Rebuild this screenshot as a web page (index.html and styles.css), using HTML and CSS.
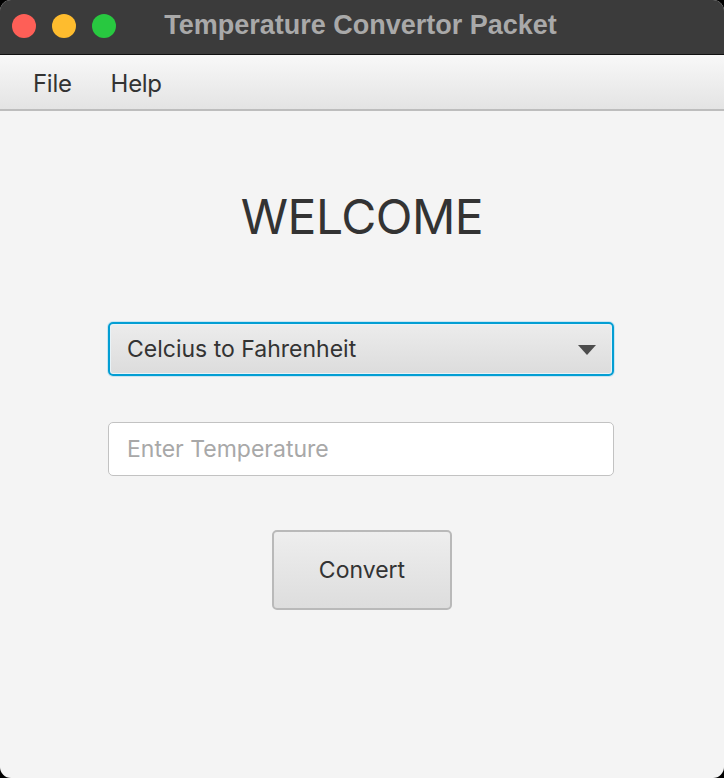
FILE: index.html
```html
<!DOCTYPE html>
<html>
<head>
<meta charset="utf-8">
<link rel="stylesheet" href="styles.css">
</head>
<body>
<div class="window">
  <div class="titlebar">
    <div class="lights">
      <span class="light red"></span>
      <span class="light yellow"></span>
      <span class="light green"></span>
    </div>
    <div class="title">Temperature Convertor Packet</div>
  </div>
  <div class="menubar">
    <span class="menu">File</span>
    <span class="menu">Help</span>
  </div>
  <div class="content">
    <h1 class="welcome">WELCOME</h1>
    <div class="combo">
      <span class="combo-text">Celcius to Fahrenheit</span>
      <svg class="arrow" width="18" height="10" viewBox="0 0 18 10"><path d="M0 0 H18 L9 10 Z" fill="#4d4d4d"/></svg>
    </div>
    <div class="field"><span class="placeholder">Enter Temperature</span></div>
    <div class="button">Convert</div>
  </div>
</div>
</body>
</html>
```
FILE: styles.css
```css
html, body {
  margin: 0;
  padding: 0;
  background: #000;
  width: 724px;
  height: 778px;
  overflow: hidden;
}
.window {
  width: 724px;
  height: 778px;
  border-radius: 11px;
  overflow: hidden;
  background: #f4f4f4;
  display: flex;
  flex-direction: column;
  font-family: Inter, "Liberation Sans", sans-serif;
}
.titlebar {
  height: 54px;
  background: #3b3b3b;
  border-bottom: 1px solid #111;
  display: flex;
  align-items: center;
  position: relative;
  flex-shrink: 0;
}
.lights {
  display: flex;
  gap: 16px;
  padding-left: 12px;
  position: absolute;
  left: 0;
  top: 14px;
}
.light {
  width: 24px;
  height: 24px;
  border-radius: 50%;
  display: block;
}
.red { background: #fe5f57; }
.yellow { background: #febc2e; }
.green { background: #28c840; }
.title {
  flex: 1;
  text-align: center;
  color: #a9a9a9;
  font-family: "Liberation Sans", Arial, sans-serif;
  font-weight: bold;
  font-size: 27px;
  margin-top: -4px;
  margin-left: -3px;
}
.menubar {
  height: 54px;
  background: linear-gradient(#f8f8f8, #e4e4e4);
  border-bottom: 2px solid #bdbdbd;
  display: flex;
  align-items: center;
  gap: 39px;
  padding-left: 33px;
  flex-shrink: 0;
}
.menu {
  font-size: 24px;
  color: #333;
  letter-spacing: -0.3px;
  margin-top: 2px;
}
.content {
  flex: 1;
  display: flex;
  flex-direction: column;
  align-items: center;
}
.welcome {
  margin: 76px 0 0 0;
  font-weight: normal;
  font-size: 48px;
  color: #333;
  line-height: 60px;
  letter-spacing: -0.5px;
}
.combo {
  margin-top: 75px;
  margin-right: 2px;
  width: 506px;
  height: 54px;
  box-sizing: border-box;
  border: 2px solid #039ed3;
  border-radius: 5px;
  background: linear-gradient(#ececec, #dcdcdc);
  box-shadow: 0 0 0 1px #c9e5f2, inset 0 0 0 1px #e8f3f8;
  display: flex;
  align-items: center;
  justify-content: space-between;
  padding: 0 16px 0 17px;
}
.combo-text {
  font-size: 23px;
  color: #333;
}
.arrow { display: block; margin-top: 2px; }
.field {
  margin-top: 46px;
  margin-right: 2px;
  width: 506px;
  height: 54px;
  box-sizing: border-box;
  border: 1px solid #c2c2c2;
  border-radius: 5px;
  background: #fff;
  display: flex;
  align-items: center;
  padding-left: 18px;
}
.placeholder {
  font-size: 23px;
  color: #a8a8a8;
}
.button {
  margin-top: 54px;
  width: 180px;
  height: 80px;
  box-sizing: border-box;
  border: 2px solid #b9b9b9;
  border-radius: 5px;
  background: linear-gradient(#eeeeee, #dddddd);
  display: flex;
  align-items: center;
  justify-content: center;
  font-size: 23px;
  color: #333;
}
```
